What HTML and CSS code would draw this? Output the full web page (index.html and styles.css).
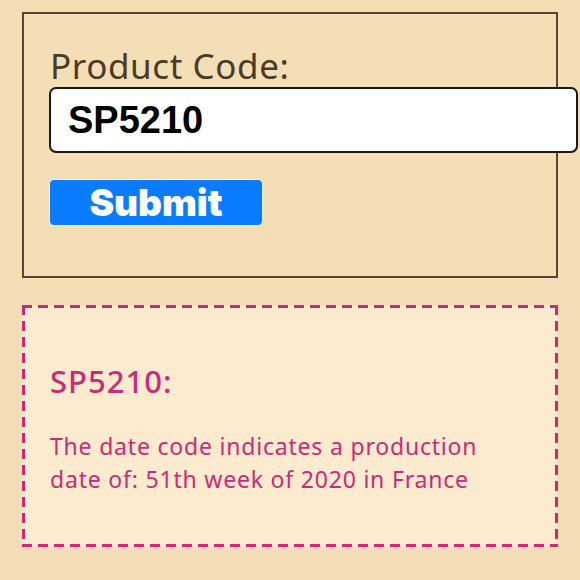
FILE: index.html
```html
<!DOCTYPE html>
<html>
<head>
<meta charset="utf-8">
<link rel="stylesheet" href="styles.css">
</head>
<body>
<div class="page">
  <form class="lookup">
    <label class="label" for="code">Product Code:</label>
    <input class="code-input" id="code" type="text" value="SP5210">
    <button class="submit" type="button">Submit</button>
  </form>
  <section class="result">
    <h2 class="result-title">SP5210:</h2>
    <p class="result-text">The date code indicates a production date of: 51th week of 2020 in France</p>
  </section>
</div>
</body>
</html>
```
FILE: styles.css
```css
html, body {
  margin: 0;
  padding: 0;
  background: #f3deb5;
}
.page {
  width: 580px;
  height: 580px;
  overflow: hidden;
  padding: 12px 0 0 22px;
  box-sizing: border-box;
  display: flex;
  flex-direction: column;
  gap: 27px;
}
.lookup {
  width: 536px;
  height: 266px;
  box-sizing: border-box;
  border: 2px solid #5b4532;
  padding: 30px 0 0 26px;
  display: flex;
  flex-direction: column;
  align-items: flex-start;
  margin: 0;
}
.label {
  font-family: "Noto Sans", sans-serif;
  font-size: 35px;
  font-weight: 400;
  letter-spacing: 0.6px;
  line-height: 43px;
  color: #4b3a2a;
}
.code-input {
  width: 529px;
  height: 66px;
  box-sizing: border-box;
  margin: 0 0 0 -1px;
  border: 2px solid #1a1a1a;
  border-radius: 7px;
  background: #fff;
  padding: 0 0 0 17px;
  font-family: "Liberation Sans", Arial, sans-serif;
  font-weight: 700;
  font-size: 38px;
  color: #000;
  outline: none;
}
.submit {
  margin: 26px 0 0 -1px;
  width: 214px;
  height: 47px;
  box-sizing: border-box;
  background: #0a7cff;
  border: 1px solid #e8f0ff;
  border-radius: 5px;
  color: #fff;
  font-family: Inter, sans-serif;
  font-weight: 900;
  font-size: 37px;
  line-height: 44px;
  padding: 0;
}
.result {
  width: 536px;
  height: 242px;
  box-sizing: border-box;
  background:
    linear-gradient(to right, #d0287a 10px, transparent 10px) left top / 16px 3px repeat-x,
    linear-gradient(to right, #d0287a 10px, transparent 10px) left bottom / 16px 3px repeat-x,
    linear-gradient(to bottom, #d0287a 10px, transparent 10px) left top / 3px 16px repeat-y,
    linear-gradient(to bottom, #d0287a 10px, transparent 10px) right top / 3px 16px repeat-y,
    #fdebd0;
  padding: 57px 0 0 28px;
  color: #cc2a79;
  font-family: "Noto Sans", sans-serif;
}
.result-title {
  margin: 0;
  font-size: 31px;
  font-weight: 500;
  letter-spacing: 1px;
  line-height: 38px;
}
.result-text {
  margin: 30px 0 0 0;
  font-size: 23px;
  letter-spacing: 0.8px;
  line-height: 33px;
  width: 452px;
}
```
